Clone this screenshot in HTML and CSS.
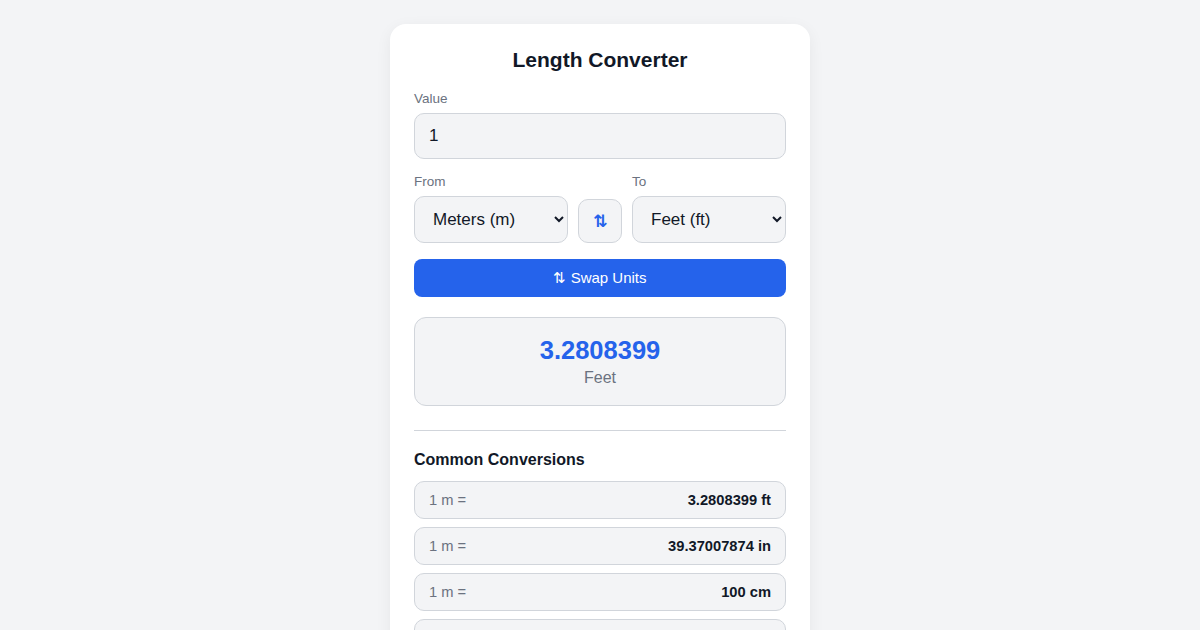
FILE: index.html
```html
<!DOCTYPE html>
<html lang="en">
<head>
    <meta charset="UTF-8">
    <meta name="viewport" content="width=device-width, initial-scale=1.0">
    <title>Length Converter</title>
    <link rel="stylesheet" href="styles.css">
</head>
<body>
    <div class="card">
        <h1>Length Converter</h1>

        <label class="field-label" for="value">Value</label>
        <input class="text-input" type="number" id="value" value="1">

        <div class="unit-row">
            <div class="unit-col">
                <label class="field-label" for="from">From</label>
                <select id="from" class="unit-select">
                    <option>Meters (m)</option>
                    <option>Feet (ft)</option>
                    <option>Inches (in)</option>
                    <option>Centimeters (cm)</option>
                </select>
            </div>
            <button class="icon-btn" type="button">&#8645;</button>
            <div class="unit-col">
                <label class="field-label" for="to">To</label>
                <select id="to" class="unit-select">
                    <option>Feet (ft)</option>
                    <option>Meters (m)</option>
                    <option>Inches (in)</option>
                    <option>Centimeters (cm)</option>
                </select>
            </div>
        </div>

        <button class="swap-btn" type="button">&#8645; Swap Units</button>

        <div class="result">
            <div class="result-value">3.2808399</div>
            <div class="result-unit">Feet</div>
        </div>

        <hr class="divider">

        <h2>Common Conversions</h2>
        <ul class="conv-list">
            <li><span class="conv-from">1 m =</span><span class="conv-to">3.2808399 ft</span></li>
            <li><span class="conv-from">1 m =</span><span class="conv-to">39.37007874 in</span></li>
            <li><span class="conv-from">1 m =</span><span class="conv-to">100 cm</span></li>
            <li><span class="conv-from">1 m =</span><span class="conv-to">1000 mm</span></li>
        </ul>
    </div>
</body>
</html>
```

FILE: styles.css
```css
body {
    font-family: "Liberation Sans", Arial, sans-serif;
    margin: 0;
    padding: 24px 0;
    background-color: #f3f4f6;
    color: #111827;
}
.card {
    width: 372px;
    margin: 0 auto;
    background: white;
    padding: 24px;
    border-radius: 16px;
    box-shadow: 0 4px 16px rgba(0, 0, 0, 0.06);
}
h1 {
    font-size: 21px;
    text-align: center;
    margin: 0 0 18px;
    line-height: 24px;
}
.field-label {
    display: block;
    font-size: 13.5px;
    color: #6b7280;
    margin-bottom: 5px;
    line-height: 18px;
}
.text-input {
    width: 100%;
    box-sizing: border-box;
    height: 46px;
    padding: 0 14px;
    font-family: inherit;
    font-size: 17px;
    color: #111827;
    background: #f3f4f6;
    border: 1px solid #d1d5db;
    border-radius: 10px;
    margin-bottom: 14px;
}
.unit-row {
    display: flex;
    align-items: flex-end;
    gap: 10px;
    margin-bottom: 16px;
}
.unit-col {
    flex: 1;
}
.unit-select {
    width: 100%;
    height: 47px;
    padding: 0 14px;
    font-family: inherit;
    font-size: 17px;
    color: #111827;
    background: #f3f4f6;
    border: 1px solid #d1d5db;
    border-radius: 10px;
}
.icon-btn {
    width: 44px;
    height: 44px;
    flex: none;
    padding: 0;
    font-family: "DejaVu Sans", sans-serif;
    font-size: 17px;
    font-weight: bold;
    color: #2563eb;
    background: #f3f4f6;
    border: 1px solid #d1d5db;
    border-radius: 10px;
}
.swap-btn {
    display: block;
    width: 100%;
    height: 38px;
    font-family: inherit;
    font-size: 15px;
    color: white;
    background: #2563eb;
    border: none;
    border-radius: 8px;
    margin-bottom: 20px;
}
.result {
    background: #f3f4f6;
    border: 1px solid #d1d5db;
    border-radius: 12px;
    text-align: center;
    padding: 17px 0 15px;
}
.result-value {
    font-size: 25.5px;
    font-weight: bold;
    color: #2563eb;
    line-height: 30px;
}
.result-unit {
    font-size: 16px;
    color: #6b7280;
    line-height: 24px;
    margin-top: 1px;
}
.divider {
    border: none;
    border-top: 1px solid #d1d5db;
    margin: 24px 0 20px;
}
h2 {
    font-size: 16px;
    margin: 0 0 12px;
    line-height: 18px;
}
.conv-list {
    list-style: none;
    margin: 0;
    padding: 0;
    display: flex;
    flex-direction: column;
    gap: 8px;
}
.conv-list li {
    display: flex;
    justify-content: space-between;
    align-items: center;
    height: 36px;
    padding: 0 14px;
    background: #f3f4f6;
    border: 1px solid #d1d5db;
    border-radius: 10px;
    font-size: 14.7px;
}
.conv-from {
    color: #6b7280;
}
.conv-to {
    font-weight: bold;
    color: #111827;
}
```
